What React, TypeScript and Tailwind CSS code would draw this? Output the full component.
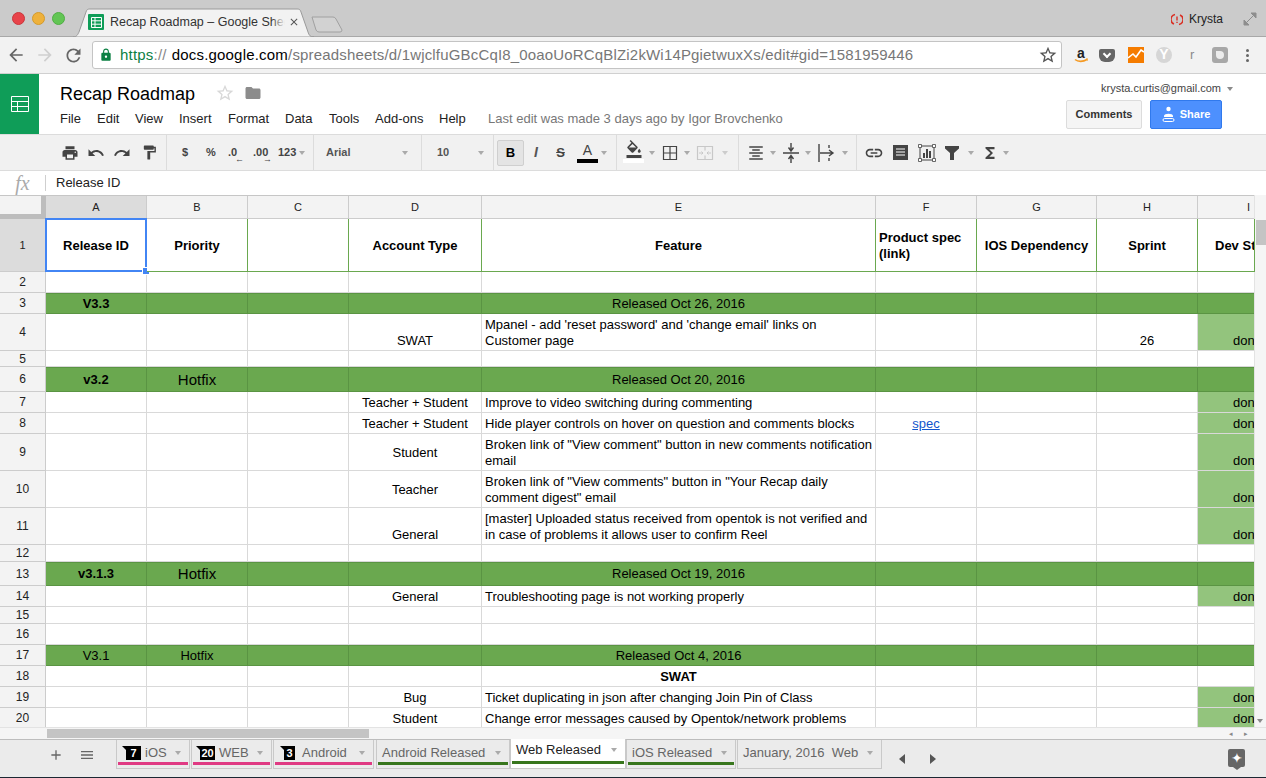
import React from "react";
import { MdPrint, MdUndo, MdRedo, MdFormatPaint, MdLink, MdFunctions, MdLock, MdStarBorder, MdFolder, MdArrowBack, MdArrowForward, MdRefresh, MdClose, MdAdd, MdMenu, MdFormatColorFill, MdFormatAlignCenter } from "react-icons/md";

const Caret = ({ c = "border-t-[#8a8a8a]" }: { c?: string }) => (
  <span className={`block shrink-0 w-0 h-0 mr-[1px] border-x-[3px] border-x-transparent border-t-[4px] ${c}`} />
);

const colW = ["w-[101px]", "w-[101px]", "w-[101px]", "w-[133px]", "w-[394px]", "w-[101px]", "w-[120px]", "w-[101px]", "w-[57px]"];

type Cell = { t?: React.ReactNode; a?: "c" | "l"; v?: "b" | "m"; cls?: string };
type Row = { n: number; h: string; cells: Record<number, Cell>; green?: boolean; done?: boolean };

const rows: Row[] = [
  { n: 2, h: "h-[21px]", cells: {} },
  { n: 3, h: "h-[21px]", green: true, cells: { 0: { t: "V3.3", a: "c", cls: "font-bold" }, 4: { t: "Released Oct 26, 2016", a: "c" } } },
  { n: 4, h: "h-[37px]", done: true, cells: { 3: { t: "SWAT", a: "c" }, 4: { t: <>Mpanel - add 'reset password' and 'change email' links on<br />Customer page</>, a: "l" }, 7: { t: "26", a: "c" } } },
  { n: 5, h: "h-[16px]", cells: {} },
  { n: 6, h: "h-[25px]", green: true, cells: { 0: { t: "v3.2", a: "c", v: "m", cls: "font-bold" }, 1: { t: "Hotfix", a: "c", v: "m", cls: "text-[15px]" }, 4: { t: "Released Oct 20, 2016", a: "c", v: "m" } } },
  { n: 7, h: "h-[21px]", done: true, cells: { 3: { t: "Teacher + Student", a: "c" }, 4: { t: "Improve to video switching during commenting", a: "l" } } },
  { n: 8, h: "h-[21px]", done: true, cells: { 3: { t: "Teacher + Student", a: "c" }, 4: { t: "Hide player controls on hover on question and comments blocks", a: "l" }, 5: { t: "spec", a: "c", cls: "text-[#1155cc] underline" } } },
  { n: 9, h: "h-[37px]", done: true, cells: { 3: { t: "Student", a: "c", v: "m", cls: "pt-[2px]" }, 4: { t: <>Broken link of "View comment" button in new comments notification<br />email</>, a: "l" } } },
  { n: 10, h: "h-[37px]", done: true, cells: { 3: { t: "Teacher", a: "c", v: "m", cls: "pt-[2px]" }, 4: { t: <>Broken link of "View comments" button in "Your Recap daily<br />comment digest" email</>, a: "l" } } },
  { n: 11, h: "h-[37px]", done: true, cells: { 3: { t: "General", a: "c" }, 4: { t: <>[master] Uploaded status received from opentok is not verified and<br />in case of problems it allows user to confirm Reel</>, a: "l" } } },
  { n: 12, h: "h-[17px]", cells: {} },
  { n: 13, h: "h-[24px]", green: true, cells: { 0: { t: "v3.1.3", a: "c", v: "m", cls: "font-bold" }, 1: { t: "Hotfix", a: "c", v: "m", cls: "text-[15px]" }, 4: { t: "Released Oct 19, 2016", a: "c", v: "m" } } },
  { n: 14, h: "h-[21px]", done: true, cells: { 3: { t: "General", a: "c" }, 4: { t: "Troubleshooting page is not working properly", a: "l" } } },
  { n: 15, h: "h-[17px]", cells: {} },
  { n: 16, h: "h-[21px]", cells: {} },
  { n: 17, h: "h-[21px]", green: true, cells: { 0: { t: "V3.1", a: "c" }, 1: { t: "Hotfix", a: "c" }, 4: { t: "Released Oct 4, 2016", a: "c" } } },
  { n: 18, h: "h-[21px]", cells: { 4: { t: "SWAT", a: "c", cls: "font-bold" } } },
  { n: 19, h: "h-[21px]", done: true, cells: { 3: { t: "Bug", a: "c" }, 4: { t: "Ticket duplicating in json after changing Join Pin of Class", a: "l" } } },
  { n: 20, h: "h-[21px]", done: true, cells: { 3: { t: "Student", a: "c" }, 4: { t: "Change error messages caused by Opentok/network problems", a: "l" } } },
];

function DataRow({ r }: { r: Row }) {
  return (
    <div className={`flex ${r.h} shrink-0`}>
      <div className="w-[46px] shrink-0 bg-[#f3f3f3] border-r border-b border-[#cccccc] flex items-center justify-center text-[12px] text-[#222]">{r.n}</div>
      {colW.map((w, i) => {
        const c = r.cells[i];
        const fill = r.green ? "bg-[#6aa84f]" : r.done && i === 8 ? "bg-[#93c47d]" : "bg-white";
        const border = r.green ? "border-t border-[#5a9443]" : "border-[#d9d9d9]";
        const vert = c?.v === "m" ? "items-center" : "items-end pb-[1px]";
        return (
          <div key={i} className={`${w} shrink-0 overflow-hidden whitespace-nowrap border-r border-b ${border} ${fill} flex ${vert} ${c?.a === "l" ? "justify-start pl-[3px]" : "justify-center"} text-[13px] leading-[16px] text-black`}>
            {i === 8 && r.done ? <span className="w-full pl-[35px]">done</span> : c ? <span className={c.cls}>{c.t}</span> : null}
          </div>
        );
      })}
    </div>
  );
}

const heads = ["A", "B", "C", "D", "E", "F", "G", "H", "I"];
const h1: React.ReactNode[] = ["Release ID", "Priority", "", "Account Type", "Feature", "", "IOS Dependency", "Sprint", ""];

const Menu = ["File", "Edit", "View", "Insert", "Format", "Data", "Tools", "Add-ons", "Help"];
const menuW = ["w-[37px]", "w-[38px]", "w-[44px]", "w-[49px]", "w-[57px]", "w-[44px]", "w-[46px]", "w-[64px]", "w-[49px]"];

const Sep = ({ m }: { m: string }) => <span className={`w-px h-[35px] bg-[#dcdcdc] shrink-0 ${m}`} />;

type TabProps = { label: string; badge?: string; badgeW?: string; gap?: string; color?: string; w: string; pl: string; ml?: string; active?: boolean };

function SheetTab({ label, badge, badgeW, gap, color, w, pl, ml, active }: TabProps) {
  return (
    <div className={`relative ${w} ${pl} ${ml ?? ""} shrink-0 flex items-start whitespace-nowrap text-[13px] leading-[18px] border-x border-b border-[#c9c9c9] ${active ? "h-[30px] -mt-[1px] pt-[2px] bg-white text-[#222]" : "h-[29px] pt-[4px] bg-[#ebebeb] text-[#666]"}`}>
      {badge && (
        <span className={`relative bg-black text-white font-bold text-[11px] leading-[14px] h-[14px] mt-[2px] ${badgeW} ${gap} text-center shrink-0`}>
          {badge}
          <span className="absolute -left-[4px] top-0 w-0 h-0 border-t-[4px] border-t-black border-l-[4px] border-l-transparent" />
        </span>
      )}
      <span>{label}</span>
      <span className="ml-auto mr-[7px] mt-[7px]"><Caret c="border-t-[#aaaaaa]" /></span>
      {color && <span className={`absolute left-[1px] right-[1px] ${active ? "bottom-[4px]" : "bottom-[3px]"} h-[3px] ${color}`} />}
    </div>
  );
}

export default function App() {
  return (
    <div className="w-[1266px] h-[778px] overflow-hidden bg-white flex flex-col font-['Liberation_Sans',Arial,sans-serif]">
      {/* Tab strip */}
      <div className="h-[36px] shrink-0 bg-[#cbcbcb] flex items-start">
        <div className="flex gap-[7px] ml-[12px] mt-[12px]">
          <span className="w-[13px] h-[13px] rounded-full bg-[#e8434a] border border-[#c9363b]" />
          <span className="w-[13px] h-[13px] rounded-full bg-[#eeb13b] border border-[#d49a2a]" />
          <span className="w-[13px] h-[13px] rounded-full bg-[#62c554] border border-[#4fae43]" />
        </div>
        <div className="relative ml-[8px] mt-[8px] w-[241px] h-[28px] flex items-center pl-[15px]">
          <svg className="absolute left-0 top-0" width="241" height="29" viewBox="0 0 241 29">
            <path d="M0 29 C4 29 5 26 6 24 L13 4 C14 1 15 1 18 1 L223 1 C226 1 227 1 228 4 L235 24 C236 27 237 29 241 29 Z" fill="#f2f2f2" stroke="#9a9a9a" />
          </svg>
          <span className="relative w-[16px] h-[16px] bg-[#0f9d58] rounded-[1px] flex items-center justify-center shrink-0">
            <svg width="11" height="11" viewBox="0 0 11 11"><path d="M.5.5h10v10H.5zM.5 3.8h10M.5 7.2h10M4 .5v10" fill="none" stroke="#fff" /></svg>
          </span>
          <span className="relative ml-[6px] w-[175px] overflow-hidden whitespace-nowrap text-[12.5px] text-[#333] leading-[16px] shrink-0">
            Recap Roadmap – Google Sheets
            <span className="absolute right-0 top-0 w-[14px] h-full bg-gradient-to-r from-transparent to-[#f2f2f2]" />
          </span>
          <MdClose className="relative text-[#555] ml-[3px] shrink-0" size={12} />
        </div>
        <svg className="-ml-[3px] mt-[16px]" width="32" height="17" viewBox="0 0 32 17"><path d="M1 1 L22 1 Q24 1 25 3 L31 14 Q31 16 29 16 L8 16 Q6 16 5 14 Z" fill="#d2d2d2" stroke="#a0a0a0" /></svg>
        <div className="ml-auto flex items-center mt-[12px] mr-[9px]">
          <svg className="mr-[6px]" width="12" height="13" viewBox="0 0 12 13"><path d="M4 1.5A5 5 0 0 0 3 11M8 11.5A5 5 0 0 0 9 2" fill="none" stroke="#d93025" strokeWidth="1.6" /><path d="M6 3.5v4M6 8.8v1.2" stroke="#d93025" strokeWidth="1.4" /></svg>
          <span className="text-[12px] text-[#222] leading-[14px] mr-[20px]">Krysta</span>
          <svg width="14" height="14" viewBox="0 0 14 14"><path d="M8 1h5v5zM1 8v5h5zM7 7l4-4M3 11l4-4" fill="#8d8d8d" stroke="#8d8d8d" /></svg>
        </div>
      </div>
      {/* Address bar */}
      <div className="h-[38px] shrink-0 bg-[#f2f2f2] border-t border-[#a8a8a8] border-b border-b-[#d0d0d0] flex items-center">
        <MdArrowBack className="ml-[6px] text-[#666]" size={20} />
        <MdArrowForward className="ml-[9px] text-[#cfcfcf]" size={20} />
        <MdRefresh className="ml-[8px] text-[#666]" size={21} />
        <div className="ml-[8px] w-[970px] h-[28px] bg-white border border-[#c4c4c4] rounded-[3px] flex items-center pl-[6px] pr-[3px] text-[15px] tracking-[0.2px] whitespace-nowrap overflow-hidden">
          <MdLock className="text-[#0b8043] mr-[7px] shrink-0" size={14} />
          <span className="text-[#0b8043]">https</span><span className="text-[#888] mr-[5px]">://</span>
          <span className="text-black">docs.google.com</span>
          <span className="text-[#777] tracking-[0.17px]">/spreadsheets/d/1wjclfuGBcCqI8_0oaoUoRCqBlZi2kWi14PgietwuxXs/edit#gid=1581959446</span>
          <MdStarBorder className="ml-auto text-[#555] shrink-0" size={20} />
        </div>
        <svg className="ml-[12px]" width="14" height="16" viewBox="0 0 14 16"><path d="M1 12.5c3 2.5 8 2.5 12 0" fill="none" stroke="#f59a23" strokeWidth="1.6" /><path d="M12 12h2v2" fill="none" stroke="#f59a23" /></svg>
        <span className="-ml-[13px] w-[12px] -mt-[5px] font-bold text-[14px] leading-[14px] text-[#222] text-center">a</span>
        <span className="ml-[12px] w-[16px] h-[13px] bg-[#666] rounded-[2px] rounded-b-[6px] flex items-center justify-center"><span className="w-[6px] h-[6px] border-r-2 border-b-2 border-white rotate-45 -mt-[3px]" /></span>
        <span className="ml-[13px] w-[16px] h-[16px] bg-[#f57c00] flex items-center justify-center">
          <svg width="16" height="12" viewBox="0 0 16 12"><path d="M0 9 L5 5 L8 8 L13 1 L16 3" fill="none" stroke="#fff" strokeWidth="1.6" /></svg>
        </span>
        <span className="ml-[12px] w-[16px] h-[16px] rounded-full bg-[#d6d6d6] text-white text-[14px] font-bold leading-[15px] text-center">Y</span>
        <span className="ml-[18px] w-[4px] text-[13px] text-[#8a8a8a] leading-[16px]">r</span>
        <span className="ml-[18px] w-[16px] h-[16px] rounded-[3px] bg-[#a8a8a8] flex items-center justify-center"><span className="w-[8px] h-[8px] rounded-full rounded-tl-none bg-[#ececec]" /></span>
        <span className="ml-[18px] flex flex-col gap-[2px]">
          <span className="w-[3px] h-[3px] rounded-full bg-[#666]" />
          <span className="w-[3px] h-[3px] rounded-full bg-[#666]" />
          <span className="w-[3px] h-[3px] rounded-full bg-[#666]" />
        </span>
      </div>
      {/* Doc header */}
      <div className="h-[61px] shrink-0 bg-white border-b border-[#dcdcdc] flex">
        <div className="w-[39px] h-[60px] bg-[#0f9d58] flex items-center justify-center">
          <svg width="18" height="16" viewBox="0 0 18 16"><path d="M.5.5h17v15H.5zM.5 5.5h17M.5 10.5h17M6.5 5.5v10" fill="none" stroke="#fff" /></svg>
        </div>
        <div className="flex-1 pl-[21px] relative">
          <div className="flex items-center h-[38px]">
            <span className="text-[18px] text-black leading-[22px] mt-[2px]">Recap Roadmap</span>
            <MdStarBorder className="ml-[20px] text-[#d8d8d8]" size={20} />
            <MdFolder className="ml-[9px] text-[#8c8c8c]" size={18} />
          </div>
          <div className="flex items-center text-[13px] text-[#222] leading-[16px] -mt-[1px] whitespace-nowrap">
            {Menu.map((m, i) => <span key={m} className={`${menuW[i]} shrink-0`}>{m}</span>)}
            <span className="text-[#777]">Last edit was made 3 days ago by Igor Brovchenko</span>
          </div>
          <div className="absolute top-0 right-0 w-[200px] h-full">
            <div className="flex items-center justify-end mt-[8px] mr-[32px] text-[11px] leading-[13px]">
              <span className="mr-[6px] text-[#444]">krysta.curtis@gmail.com</span><Caret />
            </div>
            <div className="flex mt-[5px]">
              <span className="w-[76px] h-[29px] bg-[#f5f5f5] border border-[#dcdcdc] rounded-[2px] text-[11px] font-bold text-[#333] flex items-center justify-center">Comments</span>
              <span className="ml-[8px] w-[72px] h-[29px] bg-[#4d90fe] border border-[#3079ed] rounded-[2px] text-[11px] font-bold text-white flex items-center justify-center">
                <svg className="mr-[5px]" width="13" height="17" viewBox="0 0 13 17"><circle cx="6.5" cy="3" r="2.2" fill="#fff" /><path d="M2 10c0-3 9-3 9 0v1H2z" fill="#fff" /><rect x="1" y="12.5" width="11" height="3" rx="1.5" fill="none" stroke="#fff" /></svg>
                Share
              </span>
            </div>
          </div>
        </div>
      </div>
      {/* Toolbar */}
      <div className="h-[36px] shrink-0 bg-[#f1f1f1] border-b border-[#dcdcdc] flex items-center text-[#444] text-[11px] font-bold whitespace-nowrap">
        <MdPrint className="ml-[61px] shrink-0" size={18} />
        <MdUndo className="ml-[8px] shrink-0" size={18} />
        <MdRedo className="ml-[8px] shrink-0" size={18} />
        <MdFormatPaint className="ml-[10px] shrink-0" size={17} />
        <Sep m="ml-[8px]" />
        <span className="ml-[15px] w-[24px]">$</span>
        <span className="w-[22px]">%</span>
        <span className="w-[25px] relative leading-none">.0<span className="absolute left-[7px] top-[8px] text-[9px] leading-[9px]">←</span></span>
        <span className="w-[25px] relative leading-none">.00<span className="absolute left-[10px] top-[8px] text-[9px] leading-[9px]">→</span></span>
        <span className="w-[21px]">123</span><Caret c="border-t-[#aaa]" />
        <Sep m="ml-[7px]" />
        <span className="ml-[12px] w-[76px] text-[#555]">Arial</span><Caret c="border-t-[#aaa]" />
        <Sep m="ml-[12px]" />
        <span className="ml-[15px] w-[41px] text-[#555]">10</span><Caret c="border-t-[#aaa]" />
        <Sep m="ml-[8px]" />
        <span className="ml-[3px] w-[27px] h-[26px] bg-[#e4e4e4] border border-[#cfcfcf] rounded-[2px] flex items-center justify-center text-[13px] text-black">B</span>
        <span className="ml-[7px] w-[10px] text-center text-[14px] italic font-bold text-[#555]">I</span>
        <span className="ml-[15px] w-[9px] text-center text-[13px] line-through text-[#444]">S</span>
        <span className="ml-[12px] w-[21px] h-[24px] flex flex-col items-center text-[14px] font-normal leading-[18px] text-[#444]">A<span className="w-[21px] h-[4px] bg-black" /></span>
        <span className="ml-[3px]"><Caret c="border-t-[#aaa]" /></span>
        <Sep m="ml-[8px]" />
        <span className="ml-[6px] w-[21px] h-[25px] flex flex-col items-center"><MdFormatColorFill className="shrink-0" size={18} /><span className="w-[21px] h-[4px] bg-white mt-[1px]" /></span>
        <span className="ml-[5px]"><Caret c="border-t-[#aaa]" /></span>
        <svg className="ml-[5px] shrink-0" width="18" height="18" viewBox="0 0 18 18"><path d="M2.5 2.5h13v13h-13zM2.5 9h13M9 2.5v13" fill="none" stroke="#444" strokeWidth="1.2" /></svg>
        <span className="ml-[5px]"><Caret c="border-t-[#aaa]" /></span>
        <svg className="ml-[5px] shrink-0" width="18" height="18" viewBox="0 0 18 18"><path d="M1.5 2.5h15v13h-15zM9 2.5v4M9 11.5v4" fill="none" stroke="#c8c8c8" strokeWidth="1.2" /><path d="M3 9h4M5.5 7.5L7 9l-1.5 1.5M15 9h-4M12.5 7.5L11 9l1.5 1.5" fill="none" stroke="#c8c8c8" /></svg>
        <span className="ml-[8px]"><Caret c="border-t-[#ccc]" /></span>
        <Sep m="ml-[9px]" />
        <MdFormatAlignCenter className="ml-[8px] shrink-0" size={18} />
        <span className="ml-[5px]"><Caret c="border-t-[#aaa]" /></span>
        <svg className="ml-[5px] shrink-0" width="18" height="22" viewBox="0 0 18 22"><path d="M1 11h16M9 1v7M6.5 5.5L9 9l2.5-3.5M9 21v-7M6.5 17L9 13.5l2.5 3.5" fill="none" stroke="#444" strokeWidth="1.4" /></svg>
        <span className="ml-[5px]"><Caret c="border-t-[#aaa]" /></span>
        <svg className="ml-[6px] shrink-0" width="18" height="20" viewBox="0 0 18 20"><path d="M1 1v18M2 10h13M11 7l4 3-4 3M11 2v3M11 15v3" fill="none" stroke="#444" strokeWidth="1.4" /></svg>
        <span className="ml-[6px]"><Caret c="border-t-[#aaa]" /></span>
        <Sep m="ml-[7px]" />
        <MdLink className="ml-[7px] shrink-0" size={20} />
        <svg className="ml-[8px] shrink-0" width="17" height="17" viewBox="0 0 17 17"><path d="M1 1h15v15H1z" fill="#444" /><path d="M4 5h9M4 8h9M4 11h9" stroke="#fff" /></svg>
        <svg className="ml-[9px] shrink-0" width="18" height="18" viewBox="0 0 18 18"><path d="M2 2h14v14H2z" fill="none" stroke="#444" /><path d="M6 9v5M9 5v9M12 7v7" stroke="#444" strokeWidth="2" /><path d="M.5.5h3v3h-3zM14.5.5h3v3h-3zM.5 14.5h3v3h-3zM14.5 14.5h3v3h-3z" fill="#fff" stroke="#444" strokeWidth=".8" /></svg>
        <svg className="ml-[8px] shrink-0" width="16" height="16" viewBox="0 0 16 16"><path d="M1 1h14v2.5L10 8v7H6V8L1 3.5z" fill="#444" /></svg>
        <span className="ml-[8px]"><Caret c="border-t-[#aaa]" /></span>
        <MdFunctions className="ml-[6px] shrink-0" size={18} />
        <span className="ml-[4px]"><Caret c="border-t-[#aaa]" /></span>
      </div>
      {/* Formula bar */}
      <div className="h-[24px] shrink-0 bg-white flex items-center">
        <span className="w-[45px] text-center text-[20px] leading-[22px] italic text-[#aaa] font-['Liberation_Serif',serif]">fx</span>
        <span className="w-px h-[16px] bg-[#cfcfcf] mr-[10px]" />
        <span className="text-[13px] text-[#222] leading-[16px]">Release ID</span>
      </div>
      {/* Grid */}
      <div className="flex-1 min-h-0 flex">
        <div className="w-[1254px] shrink-0 flex flex-col">
          <div className="flex h-[24px] shrink-0 border-t border-[#c6c6c6]">
            <div className="w-[46px] shrink-0 bg-[#f3f3f3] border-r-[5px] border-b-[5px] border-[#bdbdbd]" />
            {heads.map((h, i) => (
              <div key={h} className={`${colW[i]} shrink-0 overflow-hidden border-r border-b border-[#cccccc] ${i === 0 ? "bg-[#dcdcdc]" : "bg-[#f3f3f3]"} flex items-center ${i === 8 ? "justify-start pl-[49px]" : "justify-center"} text-[11px] text-[#222]`}>{h}</div>
            ))}
          </div>
          <div className="flex h-[53px] shrink-0">
            <div className="w-[46px] shrink-0 bg-[#dcdcdc] border-r border-b border-[#cccccc] flex items-center justify-center text-[11px] text-[#222]">1</div>
            {h1.map((t, i) => (
              <div key={i} className={`relative ${colW[i]} shrink-0 whitespace-nowrap bg-white border-r border-b border-[#6aa84f] flex items-center justify-center pt-[1px] text-[13px] leading-[16px] font-bold text-black ${i === 8 ? "overflow-hidden" : ""}`}>
                {i === 5 ? <span className="w-full pl-[3px]">Product spec<br />(link)</span> : i === 8 ? <span className="w-full pl-[17px]">Dev Status</span> : t}
                {i === 0 && (
                  <span className="absolute -left-px -top-px w-[102px] h-[54px] border-2 border-[#4285f4]">
                    <span className="absolute -right-[4px] -bottom-[4px] w-[6px] h-[6px] bg-[#4285f4] outline outline-1 outline-white" />
                  </span>
                )}
              </div>
            ))}
          </div>
          <div className="flex-1 min-h-0 overflow-hidden flex flex-col">
            {rows.map((r) => <DataRow key={r.n} r={r} />)}
          </div>
        </div>
        <div className="w-[12px] shrink-0 bg-[#f5f5f5] border-l border-[#e3e3e3] flex flex-col items-center">
          <span className="w-[10px] h-[25px] mt-[25px] bg-[#c4c4c4]" />
          <span className="mt-auto mb-[4px]"><Caret /></span>
        </div>
      </div>
      {/* H scrollbar */}
      <div className="h-[12px] shrink-0 bg-[#f5f5f5] border-t border-[#e3e3e3] flex items-center">
        <span className="ml-[47px] w-[322px] h-[9px] bg-[#c4c4c4]" />
        <span className="ml-auto mr-[16px] flex gap-[9px]">
          <span className="w-[6px] text-[7px] leading-[9px] text-[#888]">◂</span>
          <span className="w-[6px] text-[7px] leading-[9px] text-[#888]">▸</span>
        </span>
      </div>
      {/* Sheet tabs */}
      <div className="h-[39px] shrink-0 bg-[#ebebeb] border-t border-[#bdbdbd] border-b border-b-[#1c2833] flex items-start">
        <div className="w-[116px] h-[29px] shrink-0 flex items-center pl-[48px] text-[#666]">
          <MdAdd size={16} /><MdMenu className="ml-[15px]" size={16} />
        </div>
        <SheetTab label="iOS" badge="7" badgeW="w-[15px]" gap="mr-[4px]" color="bg-[#e03a83]" w="w-[74px]" pl="pl-[9px]" />
        <SheetTab label="WEB" badge="20" badgeW="w-[15px]" gap="mr-[4px]" color="bg-[#e03a83]" w="w-[81px]" pl="pl-[8px]" ml="ml-[1px]" />
        <SheetTab label="Android" badge="3" badgeW="w-[11px]" gap="mr-[7px]" color="bg-[#e03a83]" w="w-[101px]" pl="pl-[10px]" ml="ml-[1px]" />
        <SheetTab label="Android Released" color="bg-[#38761d]" w="w-[134px]" pl="pl-[5px]" ml="ml-[2px]" />
        <SheetTab label="Web Released" color="bg-[#38761d]" w="w-[116px]" pl="pl-[5px]" active />
        <SheetTab label="iOS Released" color="bg-[#38761d]" w="w-[110px]" pl="pl-[5px]" />
        <SheetTab label={"January, 2016\u00a0\u00a0Web"} w="w-[145px]" pl="pl-[5px]" ml="ml-[1px]" />
        <span className="ml-[17px] mt-[14px] w-0 h-0 border-y-[5px] border-y-transparent border-r-[6px] border-r-[#555]" />
        <span className="ml-[25px] mt-[14px] w-0 h-0 border-y-[5px] border-y-transparent border-l-[6px] border-l-[#555]" />
        <span className="relative ml-auto mr-[21px] mt-[9px] w-[17px] h-[18px] bg-[#666] rounded-[2px] flex items-center justify-center text-white text-[14px] leading-none">
          ✦
          <span className="absolute left-[5px] -bottom-[3px] w-0 h-0 border-x-[4px] border-x-transparent border-t-[3px] border-t-[#666]" />
        </span>
      </div>
    </div>
  );
}
